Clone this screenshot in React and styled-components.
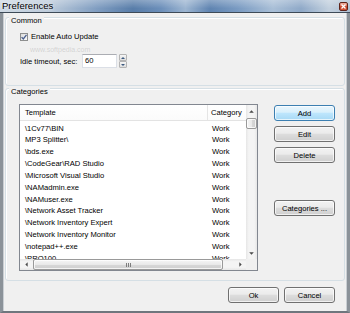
import React from 'react';
import styled, { createGlobalStyle } from 'styled-components';

const Global = createGlobalStyle`
  html, body { margin: 0; padding: 0; background: #ffffff; }
  body { font-family: "Liberation Sans", Arial, sans-serif; }
`;

const Window = styled.div`
  width: 350px;
  height: 313px;
  display: flex;
  flex-direction: column;
  overflow: hidden;
  font-family: "Liberation Sans", Arial, sans-serif;
  font-size: 7.6px;
  color: #000;
`;

const TitleBar = styled.div`
  flex: none;
  height: 12px;
  display: flex;
  align-items: center;
  justify-content: space-between;
  border-bottom: 1px solid #3e4b58;
  background:
    linear-gradient(180deg, rgba(255,255,255,0.28) 0%, rgba(255,255,255,0) 70%),
    linear-gradient(90deg, #cdd8e3 0%, #bccbdb 14%, #7e9cc0 28%, #587da9 38%, #6c8fba 46%,
      #9cb5d1 53%, #5f84b1 60%, #7a9bc2 68%, #a9bfd7 78%, #8fa9c8 86%, #c2d0de 94%, #aebfd2 100%);
`;

const Title = styled.span`
  padding-left: 2px;
  font-size: 9.5px;
  line-height: 12px;
  color: #000;
  text-shadow: 0 0 3px rgba(255,255,255,0.95);
`;

const CloseBtn = styled.div`
  width: 9px;
  height: 9px;
  margin-right: 2px;
  box-sizing: border-box;
  border: 1px solid #5e2319;
  border-radius: 2px;
  background: linear-gradient(180deg, #eeb0a2 0%, #d9654e 45%, #c23b22 55%, #d2573c 100%);
  display: flex;
  align-items: center;
  justify-content: center;
`;

const Frame = styled.div`
  flex: 1;
  display: flex;
  flex-direction: column;
  background: #f0f0f0;
  border-left: 3px solid #8b9299;
  border-right: 3px solid #8b9299;
  border-bottom: 2px solid #6f767d;
  box-shadow: inset 1px 0 0 #c9ced3, inset -1px 0 0 #c9ced3;
`;

const Group = styled.section`
  margin: ${p => p.$mt}px 2px 0;
  border: 1px solid #d5dfe5;
  border-radius: 3px;
  box-shadow: inset 1px 1px 0 #ffffff;
`;

const Caption = styled.div`
  width: max-content;
  height: 10px;
  margin: -2px 0 0 3px;
  padding: 0 2px;
  line-height: 10px;
  background: #f0f0f0;
`;

const CommonBody = styled.div`
  padding: 6px 0 17px 14px;
  display: flex;
  flex-direction: column;
`;

const CheckRow = styled.label`
  height: 9px;
  display: flex;
  align-items: center;
  gap: 3px;
`;

const CheckBox = styled.span`
  width: 8px;
  height: 8px;
  box-sizing: border-box;
  border: 1px solid #8e8f8f;
  background: linear-gradient(135deg, #dcdcdc, #fbfbfb);
  display: flex;
  align-items: center;
  justify-content: center;
`;

const Watermark = styled.div`
  height: 8px;
  margin: 5px 0 0 10px;
  line-height: 8px;
  font-size: 7px;
  color: #d0d0d0;
  text-shadow: 0 0 1px #ffffff;
`;

const IdleRow = styled.div`
  height: 14px;
  display: flex;
  align-items: center;
`;

const FieldLabel = styled.span`
  width: 62px;
`;

const NumInput = styled.div`
  width: 35px;
  height: 14px;
  box-sizing: border-box;
  border: 1px solid #dbdfe6;
  border-top-color: #abadb3;
  background: #fff;
  padding-left: 2px;
  line-height: 12px;
`;

const Spin = styled.div`
  width: 8px;
  height: 14px;
  margin-left: 2px;
  display: flex;
  flex-direction: column;
`;

const SpinBtn = styled.div`
  flex: 1;
  box-sizing: border-box;
  border: 1px solid #b4b4b4;
  border-radius: 1px;
  background: linear-gradient(180deg, #f6f6f6, #dedede);
  display: flex;
  align-items: center;
  justify-content: center;
`;

const CatBody = styled.div`
  padding: 7px 9px 9px 13px;
  display: flex;
  gap: 16px;
`;

const List = styled.div`
  width: 239px;
  height: 167px;
  box-sizing: border-box;
  border: 1px solid #828790;
  background: #fff;
  display: grid;
  grid-template-columns: 226px 11px;
  grid-template-rows: 154px 11px;
`;

const ListContent = styled.div`
  overflow: hidden;
`;

const HeaderRow = styled.div`
  height: 16px;
  box-sizing: border-box;
  border-bottom: 1px solid #e3e3e3;
  display: grid;
  grid-template-columns: 188px 38px;
  background: linear-gradient(180deg, #ffffff, #fbfbfb);
`;

const HeaderCell = styled.div`
  padding-left: ${p => p.$pl}px;
  line-height: 15px;
  white-space: nowrap;
  border-right: ${p => (p.$divider ? '1px solid #e5e5e5' : 'none')};
`;

const Rows = styled.div`
  padding-top: 1.5px;
`;

const Row = styled.div`
  height: 11.85px;
  display: grid;
  grid-template-columns: 188px 38px;
`;

const Cell = styled.div`
  padding-left: ${p => p.$pl}px;
  line-height: 11.85px;
  white-space: nowrap;
  overflow: hidden;
`;

const VScroll = styled.div`
  display: flex;
  flex-direction: column;
  background: linear-gradient(90deg, #e6e6e6 0%, #f4f4f4 25%, #f4f4f4 75%, #e6e6e6 100%);
`;

const HScroll = styled.div`
  display: flex;
  background: linear-gradient(180deg, #e6e6e6 0%, #f4f4f4 25%, #f4f4f4 75%, #e6e6e6 100%);
`;

const ArrowBtn = styled.div`
  flex: none;
  width: ${p => (p.$h ? '12px' : 'auto')};
  height: ${p => (p.$h ? 'auto' : '12px')};
  display: flex;
  align-items: center;
  justify-content: center;
`;

const Thumb = styled.div`
  flex: none;
  box-sizing: border-box;
  border: 1px solid #999999;
  border-radius: 2px;
  margin: ${p => (p.$h ? '0 0 0 1px' : '1px 0 0 0')};
  width: ${p => (p.$h ? '190px' : 'auto')};
  height: ${p => (p.$h ? 'auto' : '11px')};
  background: ${p =>
    p.$h
      ? 'linear-gradient(180deg, #f6f6f6 0%, #e9e9e9 50%, #d8d8d8 51%, #cfcfcf 100%)'
      : 'linear-gradient(90deg, #f6f6f6 0%, #e9e9e9 50%, #d8d8d8 51%, #cfcfcf 100%)'};
  box-shadow: inset 0 0 0 1px rgba(255,255,255,0.75);
  display: flex;
  align-items: center;
  justify-content: center;
`;

const Grip = styled.div`
  width: 5px;
  height: 4px;
  background: repeating-linear-gradient(90deg, #7d7d7d 0 1px, transparent 1px 2px);
`;

const Spacer = styled.div`
  flex: 1;
`;

const Corner = styled.div`
  background: #f0f0f0;
`;

const ButtonCol = styled.div`
  width: 61px;
  display: flex;
  flex-direction: column;
  gap: 5px;
`;

const Button = styled.button`
  flex: none;
  width: ${p => p.$w || 61}px;
  height: 16px;
  margin-top: ${p => p.$mt || 0}px;
  box-sizing: border-box;
  padding: 0;
  font-family: "Liberation Sans", Arial, sans-serif;
  font-size: 7.6px;
  color: #000;
  border: 1px solid ${p => (p.$default ? '#3c7fb1' : '#707070')};
  border-radius: 3px;
  background: ${p =>
    p.$default
      ? 'linear-gradient(180deg, #eaf6fd 0%, #d9f0fc 45%, #bee6fd 50%, #a7d9f5 100%)'
      : 'linear-gradient(180deg, #f2f2f2 0%, #ebebeb 45%, #dddddd 50%, #cfcfcf 100%)'};
  box-shadow: inset 0 0 0 1px rgba(255,255,255,0.7);
`;

const Footer = styled.div`
  display: flex;
  justify-content: flex-end;
  gap: 5px;
  padding: 6px 12px 0 0;
`;

const Tri = ({ dir }) => {
  const pts = {
    up: '0,4 3.5,0.5 7,4',
    down: '0,0.5 3.5,4 7,0.5',
    left: '4,0 0.5,3.5 4,7',
    right: '0.5,0 4,3.5 0.5,7',
  }[dir];
  const vert = dir === 'up' || dir === 'down';
  return (
    <svg width={vert ? 5 : 3} height={vert ? 3 : 5} viewBox={vert ? '0 0 7 4.5' : '0 0 4.5 7'}>
      <polygon points={pts} fill="#4a4a4a" />
    </svg>
  );
};

const SpinTri = ({ dir }) => (
  <svg width="4" height="2" viewBox="0 0 4 2">
    <polygon points={dir === 'up' ? '0,2 2,0 4,2' : '0,0 2,2 4,0'} fill="#3d5a80" />
  </svg>
);

const rows = [
  '\\1Cv77\\BIN',
  'MP3 Splitter\\',
  '\\bds.exe',
  '\\CodeGear\\RAD Studio',
  '\\Microsoft Visual Studio',
  '\\NAMadmin.exe',
  '\\NAMuser.exe',
  '\\Network Asset Tracker',
  '\\Network Inventory Expert',
  '\\Network Inventory Monitor',
  '\\notepad++.exe',
  '\\PRO100',
];

export default function App() {
  return (
    <>
      <Global />
      <Window>
        <TitleBar>
          <Title>Preferences</Title>
          <CloseBtn>
            <svg width="5" height="5" viewBox="0 0 5 5">
              <path d="M0.5 0.5 L4.5 4.5 M4.5 0.5 L0.5 4.5" stroke="#ffffff" strokeWidth="1.3" />
            </svg>
          </CloseBtn>
        </TitleBar>
        <Frame>
          <Group $mt={4}>
            <Caption>Common</Caption>
            <CommonBody>
              <CheckRow>
                <CheckBox>
                  <svg width="6" height="6" viewBox="0 0 6 6">
                    <path d="M0.6 3.1 L2.3 4.9 L5.5 0.8" stroke="#4a5f8f" strokeWidth="1.3" fill="none" />
                  </svg>
                </CheckBox>
                <span>Enable Auto Update</span>
              </CheckRow>
              <Watermark>www.softpedia.com</Watermark>
              <IdleRow>
                <FieldLabel>Idle timeout, sec:</FieldLabel>
                <NumInput>60</NumInput>
                <Spin>
                  <SpinBtn><SpinTri dir="up" /></SpinBtn>
                  <SpinBtn><SpinTri dir="down" /></SpinBtn>
                </Spin>
              </IdleRow>
            </CommonBody>
          </Group>
          <Group $mt={2}>
            <Caption>Categories</Caption>
            <CatBody>
              <List>
                <ListContent>
                  <HeaderRow>
                    <HeaderCell $divider $pl={5}>Template</HeaderCell>
                    <HeaderCell $pl={3}>Category</HeaderCell>
                  </HeaderRow>
                  <Rows>
                    {rows.map(r => (
                      <Row key={r}>
                        <Cell $pl={5}>{r}</Cell>
                        <Cell $pl={4}>Work</Cell>
                      </Row>
                    ))}
                  </Rows>
                </ListContent>
                <VScroll>
                  <ArrowBtn><Tri dir="up" /></ArrowBtn>
                  <Thumb />
                  <Spacer />
                  <ArrowBtn><Tri dir="down" /></ArrowBtn>
                </VScroll>
                <HScroll>
                  <ArrowBtn $h><Tri dir="left" /></ArrowBtn>
                  <Thumb $h><Grip /></Thumb>
                  <Spacer />
                  <ArrowBtn $h><Tri dir="right" /></ArrowBtn>
                </HScroll>
                <Corner />
              </List>
              <ButtonCol>
                <Button $default $mt={1}>Add</Button>
                <Button>Edit</Button>
                <Button>Delete</Button>
                <Button $mt={32}>Categories ...</Button>
              </ButtonCol>
            </CatBody>
          </Group>
          <Footer>
            <Button $w={51}>Ok</Button>
            <Button $w={51}>Cancel</Button>
          </Footer>
        </Frame>
      </Window>
    </>
  );
}
